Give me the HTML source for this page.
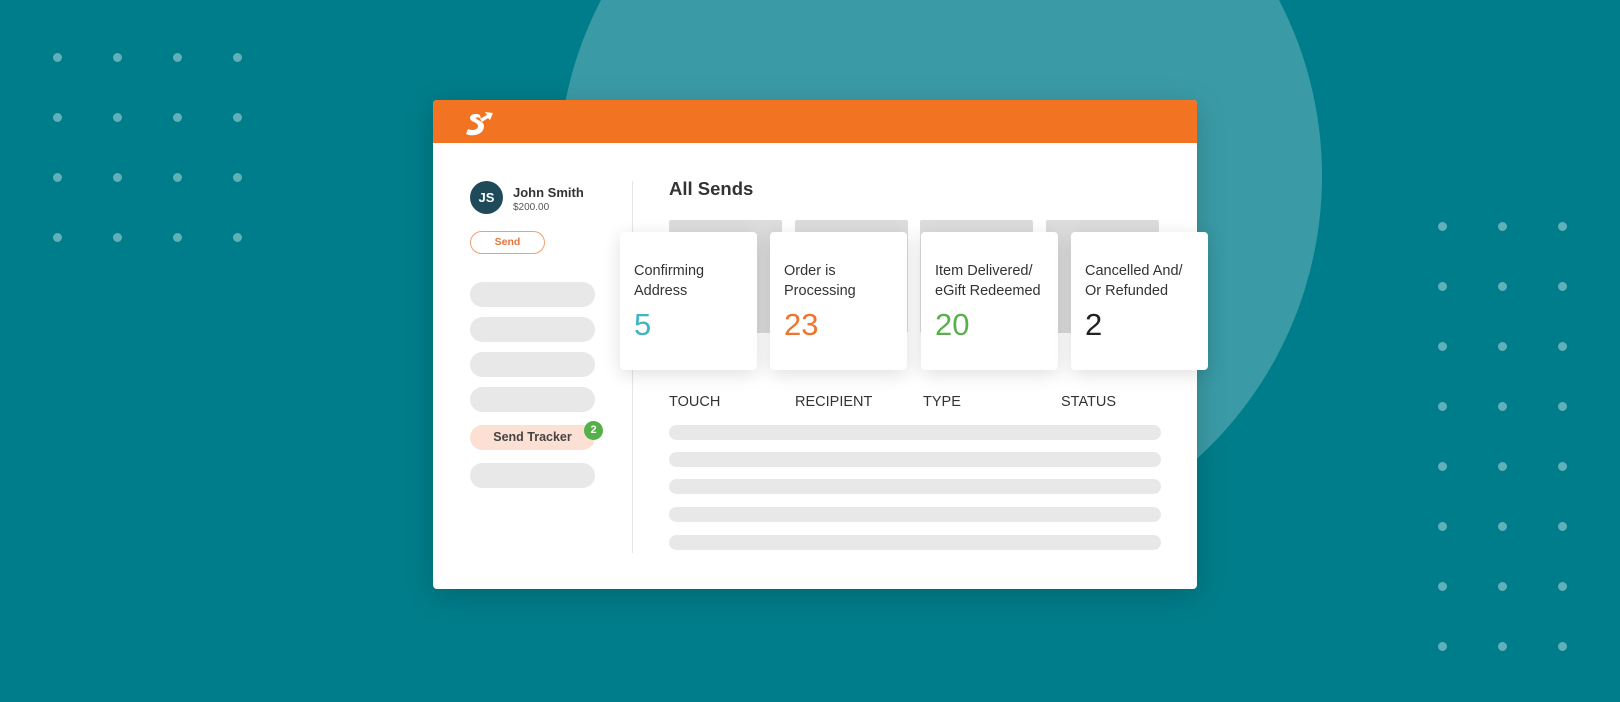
<!DOCTYPE html>
<html><head><style>
*{margin:0;padding:0;box-sizing:border-box}
body{width:1620px;height:702px;background:#007d8a;overflow:hidden;position:relative;font-family:"Liberation Sans",sans-serif}
.a{position:absolute}
.dot{position:absolute;width:9px;height:9px;border-radius:50%;background:#5fb0b8}
.pill{position:absolute;left:470px;width:125px;height:25px;border-radius:13px;background:#e8e8e8}
.bar{position:absolute;top:220px;width:113px;height:113px;background:#dcdcdc;border-radius:2px}
.card{position:absolute;top:232px;width:137px;height:138px;background:#fff;border-radius:4px;box-shadow:0 4px 18px rgba(0,0,0,.13)}
.card .t{position:absolute;left:14px;top:29px;font-size:14.5px;line-height:20px;color:#333}
.card .n{position:absolute;left:14px;top:76px;font-size:31px;line-height:34px}
.row{position:absolute;left:669px;width:492px;height:15px;border-radius:8px;background:#e8e8e8}
.h{position:absolute;top:394px;font-size:14.5px;color:#333}
</style></head><body>
<div class="a" style="left:558px;top:-206px;width:764px;height:764px;border-radius:50%;background:#3a9ba6"></div>
<div class="dot" style="left:53px;top:53px"></div><div class="dot" style="left:113px;top:53px"></div><div class="dot" style="left:173px;top:53px"></div><div class="dot" style="left:233px;top:53px"></div>
<div class="dot" style="left:53px;top:113px"></div><div class="dot" style="left:113px;top:113px"></div><div class="dot" style="left:173px;top:113px"></div><div class="dot" style="left:233px;top:113px"></div>
<div class="dot" style="left:53px;top:173px"></div><div class="dot" style="left:113px;top:173px"></div><div class="dot" style="left:173px;top:173px"></div><div class="dot" style="left:233px;top:173px"></div>
<div class="dot" style="left:53px;top:233px"></div><div class="dot" style="left:113px;top:233px"></div><div class="dot" style="left:173px;top:233px"></div><div class="dot" style="left:233px;top:233px"></div>
<div id="rd"></div>
<script>
var h='';for(var r=0;r<8;r++)for(var c=0;c<3;c++)h+='<div class="dot" style="left:'+(1438+c*60)+'px;top:'+(222+r*60)+'px"></div>';document.getElementById('rd').outerHTML=h;
</script>
<div class="a" style="left:433px;top:100px;width:764px;height:489px;background:#fff;border-radius:4px;box-shadow:0 6px 30px rgba(0,0,0,.18)">
 <div class="a" style="left:0;top:0;width:764px;height:43px;background:#f27422;border-radius:4px 4px 0 0"></div>
 <svg class="a" style="left:30px;top:8px" width="32" height="30" viewBox="0 0 32 30"><path d="M17 7 C13 5 7 6 7 10 C7 14 15 14 15 18 C15 22 9 23 5 21 L3 26 C9 29 21 27 21 18 C21 13 13 12 13 10 C13 9 16 9 18 11 Z" fill="#fff"/><path d="M17 11 L24 7 L22 4 L30 5 L27 12 L25 10 L19 14 Z" fill="#fff"/></svg>
</div>
<div class="a" style="left:470px;top:181px;width:33px;height:33px;border-radius:50%;background:#1e4a5a;color:#fff;font-weight:bold;font-size:13px;line-height:33px;text-align:center">JS</div>
<div class="a" style="left:513px;top:185px;font-size:13px;font-weight:bold;color:#333">John Smith</div>
<div class="a" style="left:513px;top:202px;font-size:10px;color:#555">$200.00</div>
<div class="a" style="left:470px;top:231px;width:75px;height:23px;border:1.5px solid #f0a070;border-radius:12px;color:#e8733a;font-size:10.5px;font-weight:bold;text-align:center;line-height:20px">Send</div>
<div class="pill" style="top:282px"></div><div class="pill" style="top:317px"></div><div class="pill" style="top:352px"></div><div class="pill" style="top:387px"></div>
<div class="pill" style="top:425px;background:#fce0d4;text-align:center;font-size:12.5px;font-weight:bold;color:#444;line-height:25px">Send Tracker</div>
<div class="a" style="left:584px;top:421px;width:19px;height:19px;border-radius:50%;background:#55b04a;color:#fff;font-size:11px;font-weight:bold;text-align:center;line-height:19px">2</div>
<div class="pill" style="top:463px"></div>
<div class="a" style="left:632px;top:181px;width:1px;height:372px;background:#e6e6e6"></div>
<div class="a" style="left:669px;top:178px;font-size:18.5px;font-weight:bold;color:#333">All Sends</div>
<div class="bar" style="left:669px"></div><div class="bar" style="left:795px"></div><div class="bar" style="left:920px"></div><div class="bar" style="left:1046px"></div>
<div class="card" style="left:620px"><div class="t">Confirming<br>Address</div><div class="n" style="color:#3fb4c3">5</div></div>
<div class="card" style="left:770px"><div class="t">Order is<br>Processing</div><div class="n" style="color:#ee7430">23</div></div>
<div class="card" style="left:921px"><div class="t">Item Delivered/<br>eGift Redeemed</div><div class="n" style="color:#5bb04e">20</div></div>
<div class="card" style="left:1071px"><div class="t">Cancelled And/<br>Or Refunded</div><div class="n" style="color:#222">2</div></div>
<div class="h" style="left:669px">TOUCH</div><div class="h" style="left:795px">RECIPIENT</div><div class="h" style="left:923px">TYPE</div><div class="h" style="left:1061px">STATUS</div>
<div class="row" style="top:425px"></div><div class="row" style="top:452px"></div><div class="row" style="top:479px"></div><div class="row" style="top:507px"></div><div class="row" style="top:535px"></div>
</body></html>
